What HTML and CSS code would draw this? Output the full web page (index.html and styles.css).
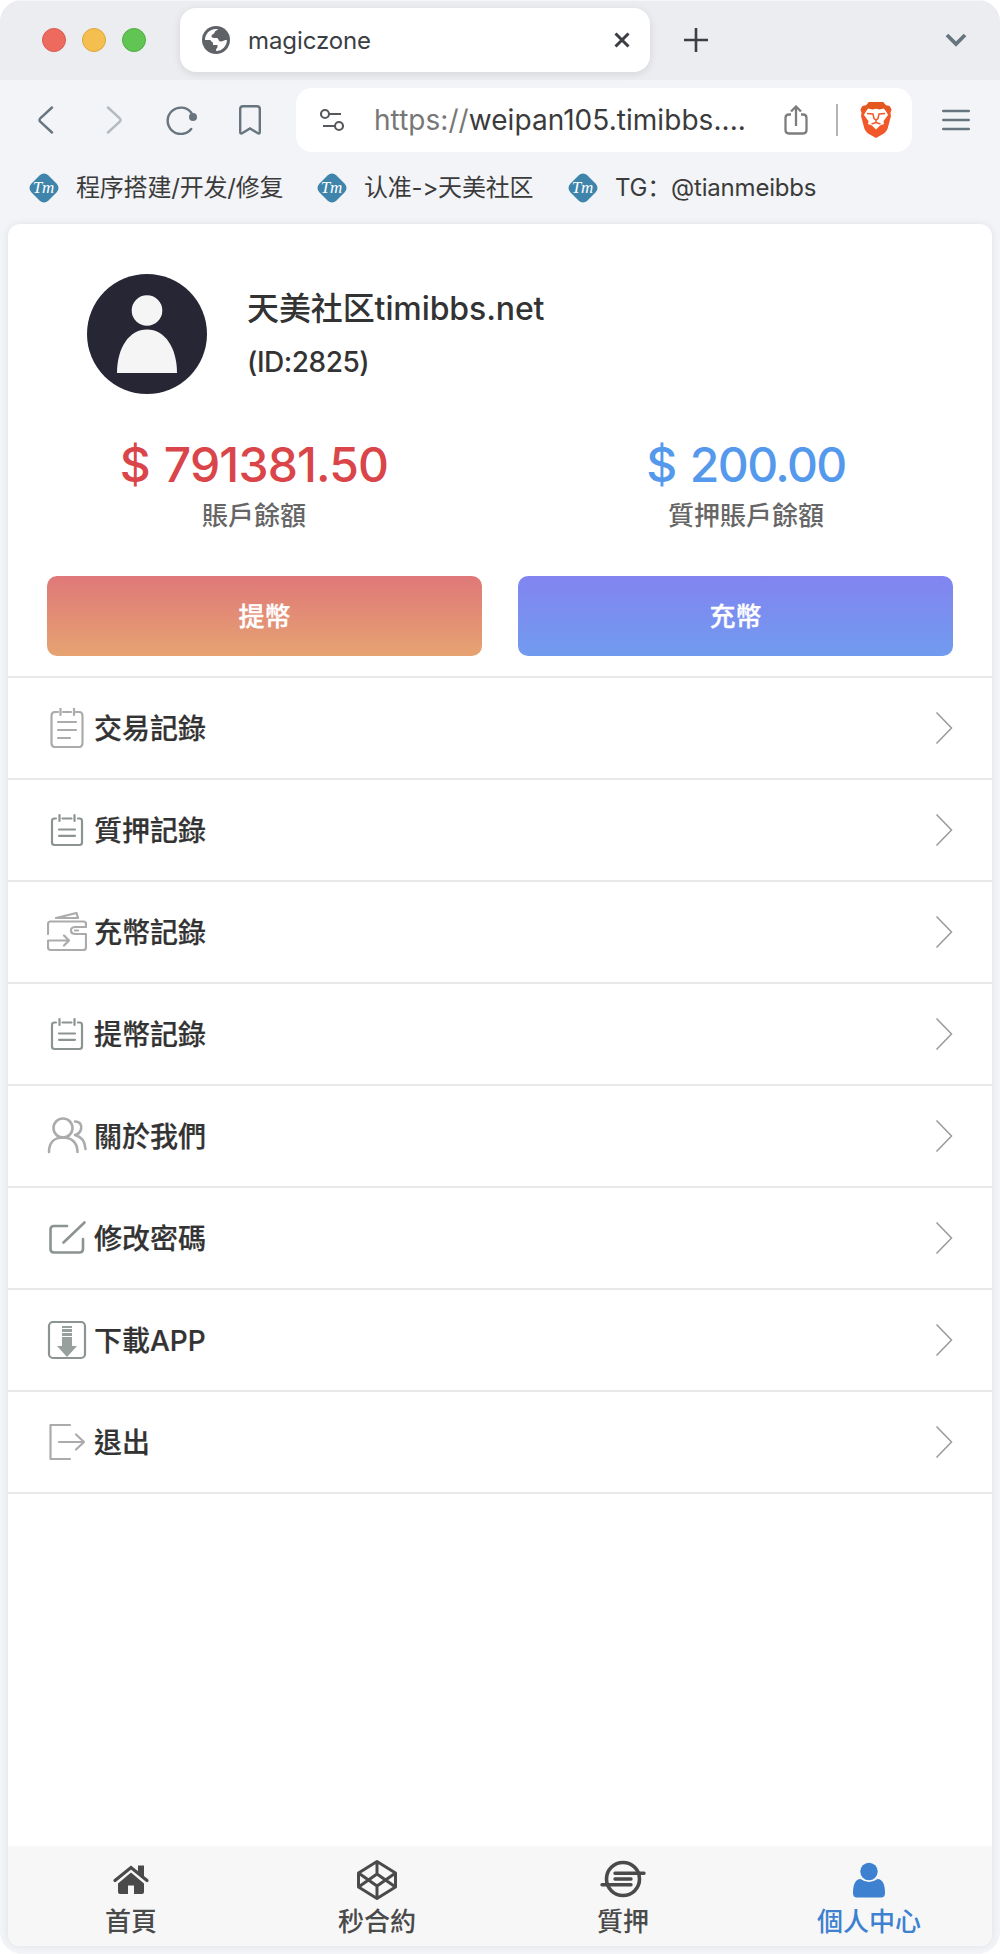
FILE: index.html
```html
<!DOCTYPE html>
<html lang="zh-TW">

<head>
  <meta charset="UTF-8" />
  <meta name="viewport" content="width=device-width, initial-scale=1.0" />
  <title>magiczone</title>
  <link rel="stylesheet" href="styles.css">
</head>

<body>
  <svg width="0" height="0" class="defs">
    <symbol id="note" viewBox="0 0 40 40">
      <path d="M9 8.500H7.500Q5 8.500 5 11V32.500Q5 35 7.500 35H32.500Q35 35 35 32.500V11Q35 8.500 32.500 8.500H31M15.500 8.500h9M12.500 5v6M27.500 5v6M12 19.500h16M12 25.800h16" />
    </symbol>
    <symbol id="arrow" viewBox="0 0 18 34">
      <path d="M1.500 1.500L16.500 17L1.500 32.500" />
    </symbol>
    <symbol id="diamond" viewBox="0 0 30 30">
      <rect x="3" y="3" width="24" height="24" rx="6" transform="rotate(45 15 15)" fill="#3f85ab" />
    </symbol>
  </svg>

  <div class="browser">
    <div class="tabbar">
      <div class="lights">
        <span class="light red"></span>
        <span class="light yellow"></span>
        <span class="light green"></span>
      </div>
      <div class="tab">
        <svg width="28" height="28" viewBox="0 0 28 28">
          <circle cx="14" cy="14" r="14" fill="#5f6368" />
          <path d="M16 3c-.5 1.500-3 1.500-3.500 3.500C12.500 8 9.500 8 9.500 10.500c0 1.500 3 1.500 5.500 1.500 1.500 0 1.500 3.500 3.500 3.500 3 0 3-1.500 6.400-1.500 0 6-4.500 11-10.900 11 0-1 .4-3 1.500-3.500V19h-4.500v-2.500c-2-.5-1.500-2-3-2.500H3C3 8 7.500 3 14 3z" fill="#fff" />
        </svg>
        <span class="tab-title">magiczone</span>
        <svg class="close" width="16" height="16" viewBox="0 0 16 16"><path d="M1.500 1.500l13 13M14.500 1.500l-13 13" /></svg>
      </div>
      <svg class="plus" width="24" height="24" viewBox="0 0 24 24"><path d="M12 0v24M0 12h24" /></svg>
      <svg class="down" width="22" height="14" viewBox="0 0 22 14"><path d="M2 2L11 11L20 2" /></svg>
    </div>

    <div class="toolbar">
      <svg class="tool back" width="16" height="28" viewBox="0 0 16 28"><path d="M14 1.500L2.500 12Q.5 14 2.500 16L14 26.500" /></svg>
      <svg class="tool forward" width="16" height="28" viewBox="0 0 16 28"><path d="M2 1.500L13.500 12Q15.500 14 13.500 16L2 26.500" /></svg>
      <svg class="tool reload" width="32" height="30" viewBox="0 0 32 30">
        <path d="M25.500 8A13.200 13.200 0 1 0 25.200 24" />
        <circle cx="27" cy="12" r="4" fill="#66757f" stroke="none" />
      </svg>
      <svg class="tool mark" width="22" height="30" viewBox="0 0 22 30"><path d="M1.200 27V4Q1.200 1.200 4 1.200H18Q20.800 1.200 20.800 4V27Q20.800 29.500 18.500 28L11 23.500L3.500 28Q1.200 29.500 1.200 27Z" /></svg>
      <div class="address">
        <svg class="tune" width="24" height="24" viewBox="0 0 24 24">
          <circle cx="5" cy="6" r="4" />
          <path d="M9 6h12M3 18h12" />
          <circle cx="19" cy="18" r="4" />
        </svg>
        <span class="url"><span class="scheme">https://</span>weipan105.timibbs....</span>
        <svg class="share" width="24" height="30" viewBox="0 0 24 30"><path d="M7 9.500H5Q1.500 9.500 1.500 13V25Q1.500 28.500 5 28.500H19Q22.500 28.500 22.500 25V13Q22.500 9.500 19 9.500H17M12 21V2M7 6.500L12 1.500L17 6.500" /></svg>
        <span class="divider"></span>
        <svg class="brave" width="32" height="36" viewBox="0 0 32 36">
          <path d="M9 0H23L26 3.500L29.500 4L31.500 8L30.500 11L31 14L27.500 27Q26.500 29.500 24 31.500L16 36L8 31.500Q5.500 29.500 4.500 27L1 14L1.500 11L.5 8L2.500 4L6 3.500Z" fill="#f1592a" />
          <path d="M9 0H23L26 3.500L29.500 4L31.500 8H.5L2.500 4L6 3.500Z" fill="#e4571f" />
          <path d="M5 11L8 6.500L12.500 7.500L16 6.800L19.500 7.500L24 6.500L27 11L28 13L23.500 19L24 22L20 23.500L16 27.500L12 23.500L8 22L8.500 19L4 13Z" fill="#fff" />
          <path d="M7 11.500L13 12L14 16.500L16 18L18 16.500L19 12L25 11.500M16 18V21M11.500 22L16 20.500L20.500 22" fill="none" stroke="#f1592a" stroke-width="1.500" />
        </svg>
      </div>
      <svg class="tool menu" width="28" height="22" viewBox="0 0 28 22"><path d="M1.200 2h25.600M1.200 11h25.600M1.200 20h25.600" /></svg>
    </div>

    <div class="bookmarks" lang="zh-CN">
      <a class="bookmark b1"><span class="tm"><svg width="30" height="30"><use href="#diamond" /></svg><i>Tm</i></span><span class="bm-text">程序搭建/开发/修复</span></a>
      <a class="bookmark b2"><span class="tm"><svg width="30" height="30"><use href="#diamond" /></svg><i>Tm</i></span><span class="bm-text">认准-&gt;天美社区</span></a>
      <a class="bookmark b3"><span class="tm"><svg width="30" height="30"><use href="#diamond" /></svg><i>Tm</i></span><span class="bm-text">TG：@tianmeibbs</span></a>
    </div>

    <div class="page">
      <div class="user">
        <svg class="avatar" width="120" height="120" viewBox="0 0 120 120">
          <circle cx="60" cy="60" r="60" fill="#272635" />
          <circle cx="60" cy="36.500" r="15.300" fill="#f5f5f5" />
          <path d="M30 99C30 74 42 55.500 60 55.500S90 74 90 99Z" fill="#f5f5f5" />
        </svg>
        <div>
          <div class="name">天美社区timibbs.net</div>
          <div class="uid">(ID:2825)</div>
        </div>
      </div>

      <div class="balance">
        <div class="balance-item">
          <div class="money red-text">$ 791381.50</div>
          <div class="label">賬戶餘額</div>
        </div>
        <div class="balance-item">
          <div class="money blue-text">$ 200.00</div>
          <div class="label">質押賬戶餘額</div>
        </div>
      </div>

      <div class="buttons">
        <button class="btn btn-out">提幣</button>
        <button class="btn btn-in">充幣</button>
      </div>

      <ul class="list">
        <li>
          <svg class="icon light-icon" viewBox="0 0 40 40"><path d="M11 4H8Q4.500 4 4.500 8V34.500Q4.500 39 8 39H32Q35.500 39 35.500 34.500V8Q35.500 4 32 4H29M16 4h8M13.500 0v7M27 0v7M11 14h18M11 22h18M11 30h12" /></svg>
          <span>交易記錄</span>
          <svg class="arrow"><use href="#arrow" /></svg>
        </li>
        <li>
          <svg class="icon"><use href="#note" /></svg>
          <span>質押記錄</span>
          <svg class="arrow"><use href="#arrow" /></svg>
        </li>
        <li>
          <svg class="icon light-icon" viewBox="0 0 40 40"><path d="M1 22V12Q1 9.500 3.500 9.500H36.500Q39 9.500 39 12V15H28.500Q24 15 24 18.500T28.500 22H39V35Q39 38 36.500 38H3.500Q1 38 1 35V28.500H21M17 23.500L22 28.500L17 33.500M9 6L29.500 1L31 6ZM28 18.500h3" /></svg>
          <span>充幣記錄</span>
          <svg class="arrow"><use href="#arrow" /></svg>
        </li>
        <li>
          <svg class="icon"><use href="#note" /></svg>
          <span>提幣記錄</span>
          <svg class="arrow"><use href="#arrow" /></svg>
        </li>
        <li>
          <svg class="icon light-icon thick" viewBox="0 0 40 40"><circle cx="16" cy="12" r="9.500" /><path d="M2 36C2 26 8 21.500 16 21.500S30.500 26 30.500 36M28 5.500C33 5.500 35 9 34 13.500Q32.500 18 28 19C34 20.500 38 25 38.500 33" /></svg>
          <span>關於我們</span>
          <svg class="arrow"><use href="#arrow" /></svg>
        </li>
        <li>
          <svg class="icon thick" viewBox="0 0 40 40"><path d="M20 8H7Q3.500 8 3.500 11.500V31Q3.500 34.500 7 34.500H32.500Q36 34.500 36 31V21M16.500 24.500L37.500 4.500" /></svg>
          <span>修改密碼</span>
          <svg class="arrow"><use href="#arrow" /></svg>
        </li>
        <li>
          <svg class="icon" viewBox="0 0 40 40"><rect x="2" y="2" width="36" height="36" rx="4" /><path d="M15 6H25V8H15ZM15 9H25V12H15ZM15 13H25V16H15ZM15 17H25V26H30L20 37L10 26H15Z" fill="#98a09d" stroke="none" /></svg>
          <span>下載APP</span>
          <svg class="arrow"><use href="#arrow" /></svg>
        </li>
        <li>
          <svg class="icon light-icon" viewBox="0 0 40 40"><path d="M23 3H3.500V37H23M12 20H37M29 12.500L37 20L29 27.500" /></svg>
          <span>退出</span>
          <svg class="arrow"><use href="#arrow" /></svg>
        </li>
      </ul>

      <div class="nav">
        <a class="nav-item">
          <svg width="46" height="42" viewBox="0 0 46 42">
            <path d="M23 13.500L36 24.500V33Q36 35 34 35H26V26.500H20V35H12Q10 35 10 33V24.500Z" fill="#4a4a4a" />
            <path d="M7 21.500L23 8.500L39 21.500" fill="none" stroke="#4a4a4a" stroke-width="3.200" stroke-linecap="round" />
            <path d="M30 6.500h6V18l-6-5Z" fill="#4a4a4a" />
          </svg>
          <span>首頁</span>
        </a>
        <a class="nav-item">
          <svg width="46" height="42" viewBox="0 0 46 42"><path d="M23 2.500L41.500 14V28L23 39.500L4.500 28V14ZM4.500 14L23 27L41.500 14M4.500 28L23 15L41.500 28M23 2.500V15M23 27V39.500" fill="none" stroke="#4a4a4a" stroke-width="3" stroke-linejoin="round" /></svg>
          <span>秒合約</span>
        </a>
        <a class="nav-item">
          <svg width="46" height="42" viewBox="0 0 46 42"><circle cx="23" cy="20" r="16.500" fill="none" stroke="#4a4a4a" stroke-width="3.600" /><path d="M15 14.200h29M15 20h16M2 25.700h29" stroke="#4a4a4a" stroke-width="3.400" stroke-linecap="round" /></svg>
          <span>質押</span>
        </a>
        <a class="nav-item active">
          <svg width="46" height="42" viewBox="0 0 46 42"><circle cx="23" cy="12.500" r="8.700" fill="#3d81d0" /><path d="M14.500 20Q23 26 31.500 20Q39 20.500 39 34Q39 38.500 35 38.500H11Q7 38.500 7 34Q7 20.500 14.500 20Z" fill="#3d81d0" /></svg>
          <span>個人中心</span>
        </a>
      </div>
    </div>
  </div>
</body>

</html>
```
FILE: styles.css
```css
* {
  box-sizing: border-box;
}

body {
  margin: 0;
  background: #fff;
  font-family: Inter, "Noto Sans CJK TC", sans-serif;
  font-weight: 500;
  color: #333;
}

svg {
  display: block;
  flex: none;
}

.defs {
  position: absolute;
}

.browser {
  width: 1000px;
  height: 1954px;
  background: #f3f4f7;
  border-radius: 22px;
  overflow: hidden;
}

.tabbar {
  display: flex;
  align-items: center;
  height: 80px;
  padding: 0 33px 0 42px;
  background: #ecedf1;
  box-shadow: inset 0 1px #f6f6f8;
}

.lights {
  display: flex;
  gap: 16px;
  width: 138px;
}

.light {
  width: 24px;
  height: 24px;
  border-radius: 50%;
  border: 1px solid;
}

.red {
  background: #ed6a5e;
  border-color: #d9594f;
}

.yellow {
  background: #f5bf4f;
  border-color: #dba63c;
}

.green {
  background: #61c554;
  border-color: #4fad42;
}

.tab {
  display: flex;
  align-items: center;
  width: 470px;
  height: 64px;
  padding: 0 20px 0 22px;
  background: #fff;
  border-radius: 16px;
  box-shadow: 0 2px 8px rgba(0, 0, 0, 0.1);
}

.tab-title {
  margin-left: 18px;
  font-size: 24px;
  font-weight: 400;
  letter-spacing: -0.1px;
  color: #3b3e43;
}

.close {
  margin-left: auto;
  fill: none;
  stroke: #3b3e43;
  stroke-width: 3;
}

.plus {
  margin-left: 34px;
  stroke: #3b3e43;
  stroke-width: 2.6;
}

.down {
  margin-left: auto;
  fill: none;
  stroke: #66757f;
  stroke-width: 3.8;
}

.toolbar {
  display: flex;
  align-items: center;
  height: 80px;
  padding: 0 30px 0 38px;
}

.tool {
  fill: none;
  stroke: #66757f;
  stroke-width: 2.4;
  stroke-linecap: round;
}

.forward {
  margin-left: 52px;
  opacity: 0.45;
}

.reload {
  margin-left: 44px;
}

.mark {
  margin-left: 41px;
}

.address {
  display: flex;
  align-items: center;
  width: 616px;
  height: 64px;
  margin-left: 35px;
  padding: 0 20px 0 24px;
  background: #fff;
  border-radius: 16px;
}

.tune {
  fill: none;
  stroke: #55585c;
  stroke-width: 2.1;
}

.url {
  width: 374px;
  margin-left: 30px;
  font-size: 28px;
  font-weight: 400;
  letter-spacing: 0.05px;
  color: #3b3b3b;
  white-space: nowrap;
}

.scheme {
  color: #777;
}

.share {
  margin-left: 36px;
  fill: none;
  stroke: #7d7d7d;
  stroke-width: 2.3;
}

.divider {
  width: 2px;
  height: 32px;
  margin-left: 28px;
  background: #b5b5b5;
}

.brave {
  margin-left: 22px;
}

.menu {
  margin-left: 30px;
}

.bookmarks {
  display: flex;
  height: 64px;
  padding: 0 29px;
}

.bookmark {
  display: flex;
  align-items: center;
  height: 56px;
}

.b1 {
  width: 288px;
}

.b2 {
  width: 251px;
}

.tm {
  position: relative;
  width: 30px;
  margin-right: 17px;
}

.tm i {
  position: absolute;
  top: 7px;
  left: 0;
  width: 29px;
  font: italic 17px/16px "Liberation Serif", serif;
  color: #fff;
  text-align: center;
}

.bm-text {
  padding-bottom: 5px;
  font-family: Inter, "Noto Sans CJK SC", sans-serif;
  font-size: 24px;
  font-weight: 400;
  font-feature-settings: "calt" 0;
  letter-spacing: -0.2px;
  color: #3b3b3b;
  white-space: nowrap;
}

.page {
  display: flex;
  flex-direction: column;
  width: 984px;
  height: 1722px;
  margin: 0 auto;
  background: #fff;
  border-radius: 12px;
  overflow: hidden;
  box-shadow: 0 0 8px rgba(0, 0, 0, 0.08);
}

.user {
  display: flex;
  padding: 50px 79px 0;
}

.avatar {
  margin-right: 40px;
}

.name {
  margin-top: 10px;
  font-size: 32px;
  line-height: 50px;
  letter-spacing: -0.1px;
}

.uid {
  margin-top: 3px;
  font-size: 28px;
  line-height: 50px;
  letter-spacing: -0.5px;
}

.balance {
  display: flex;
  height: 182px;
  padding-top: 41px;
}

.balance-item {
  flex: 1;
  text-align: center;
}

.money {
  font-size: 48px;
  line-height: 60px;
}

.red-text {
  color: #da454a;
  letter-spacing: -0.85px;
  word-spacing: 2px;
}

.blue-text {
  color: #5499ec;
  letter-spacing: -1.6px;
  word-spacing: 3px;
}

.label {
  font-size: 26px;
  line-height: 42px;
  color: #666;
}

.buttons {
  display: flex;
  gap: 36px;
  height: 100px;
  padding: 0 39px 20px;
}

.btn {
  flex: 1;
  padding: 0 0 4px;
  border: none;
  border-radius: 10px;
  color: #fff;
  font: inherit;
  font-size: 26px;
  -webkit-text-stroke: 0.3px;
}

.btn-out {
  background: linear-gradient(#df7879, #e6a371);
}

.btn-in {
  background: linear-gradient(#8284f0, #719bef);
}

.list {
  margin: 0;
  padding: 0;
  list-style: none;
  border-top: 2px solid #e8e8e8;
}

.list li {
  display: flex;
  align-items: center;
  height: 102px;
  padding: 0 39px;
  border-bottom: 2px solid #e8e8e8;
  font-size: 28px;
}

.list span {
  padding-bottom: 2px;
  -webkit-text-stroke: 0.2px;
}

.icon {
  width: 40px;
  height: 40px;
  margin-right: 7px;
  fill: none;
  stroke: #8b9491;
  stroke-width: 2.2;
  stroke-linecap: round;
  stroke-linejoin: round;
}

.light-icon {
  stroke: #ababab;
}

.thick {
  stroke-width: 2.6;
}

.arrow {
  width: 18px;
  height: 34px;
  margin-left: auto;
  fill: none;
  stroke: #999;
  stroke-width: 1.5;
}

.nav {
  display: flex;
  height: 100px;
  margin-top: auto;
  background: #f7f7f7;
}

.nav-item {
  flex: 1;
  display: flex;
  flex-direction: column;
  align-items: center;
  padding-top: 13px;
  font-size: 26px;
  line-height: 42px;
  color: #4a4a4a;
}

.active {
  color: #3d81d0;
}
```
